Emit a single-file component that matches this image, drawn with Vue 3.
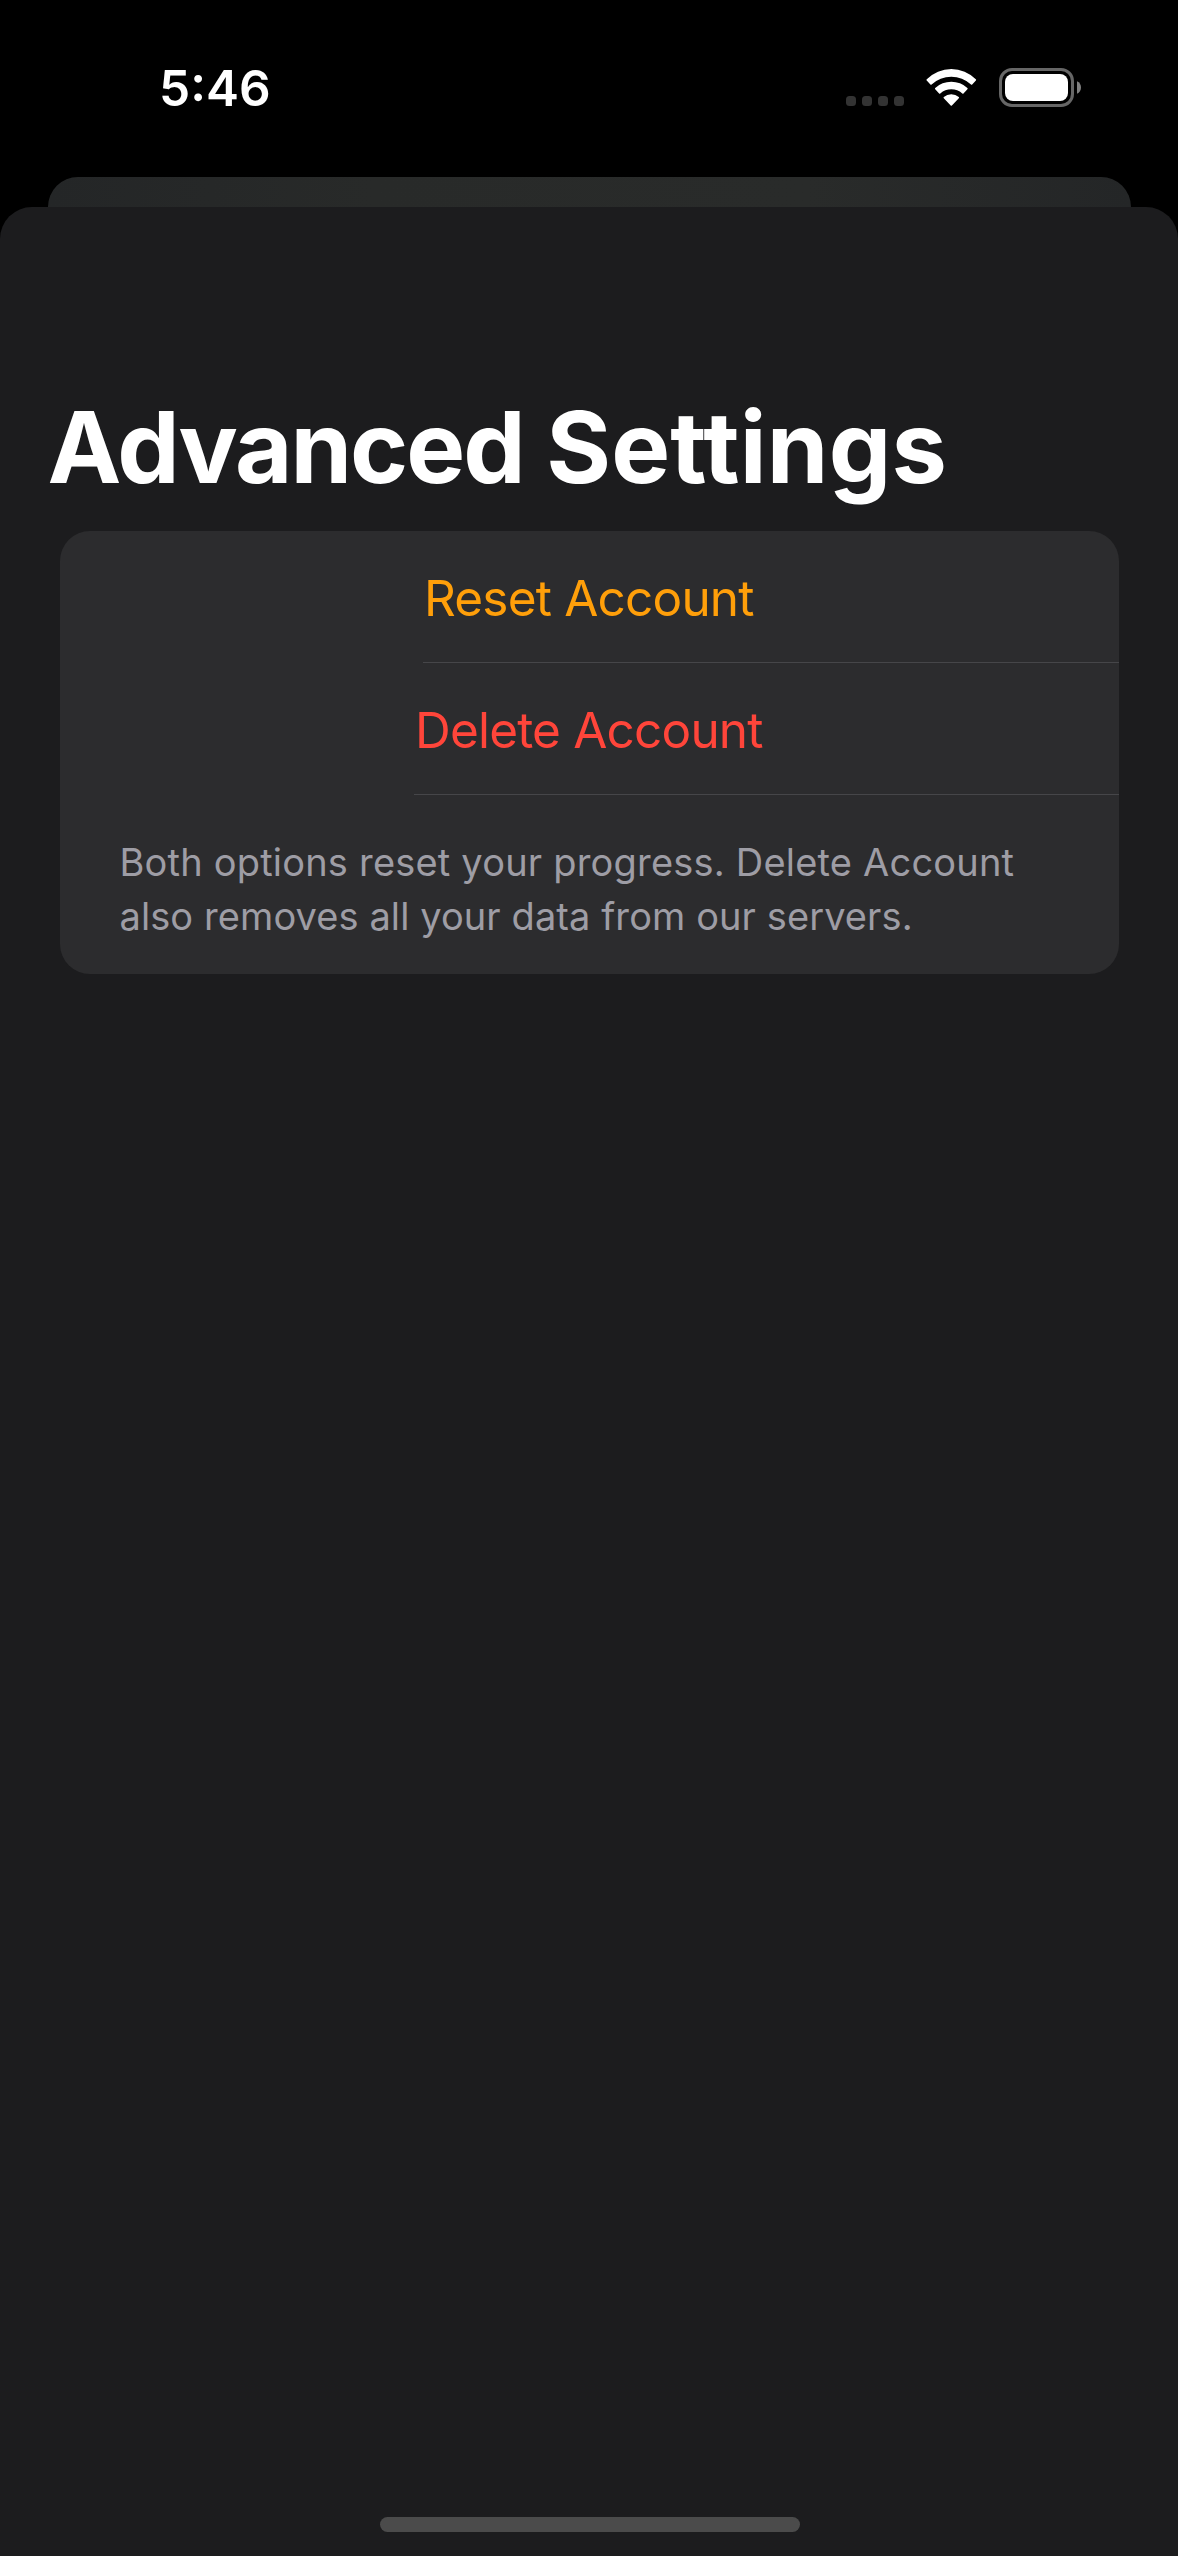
<script setup>
const actions = [
  { id: 'reset', label: 'Reset Account' },
  { id: 'delete', label: 'Delete Account' }
]
const note = [
  'Both options reset your progress. Delete Account',
  'also removes all your data from our servers.'
]
</script>

<template>
  <main class="screen">
    <header class="status">
      <span class="time">5:46</span>
      <div class="indicators">
        <div class="dots"><i v-for="n in 4" :key="n"></i></div>
        <svg class="wifi" width="51" height="38" viewBox="0 0 51 38" fill="#fff">
          <path d="M.7 11.4Q.2 10.8.8 10.3A34.5 34.5 0 0 1 49.8 10.3Q50.4 10.8 49.9 11.4L46.2 15.4Q45.6 16 45 15.4A29 29 0 0 0 5.6 15.4Q5 16 4.4 15.4Z" />
          <path d="M9.2 20.2Q8.6 19.6 9.2 19.1A23.5 23.5 0 0 1 41.4 19.1Q42 19.6 41.4 20.2L37.5 24.4Q36.9 25 36.3 24.4A16.6 16.6 0 0 0 14.3 24.4Q13.7 25 13.1 24.4Z" />
          <path d="M17.8 29.2Q17.2 28.6 17.8 28.1A11.2 11.2 0 0 1 32.8 28.1Q33.4 28.6 32.8 29.2L25.9 36.4Q25.3 37 24.7 36.4Z" />
        </svg>
        <svg class="battery" width="83" height="39" viewBox="0 0 83 39">
          <rect x="1.5" y="1.5" width="72" height="36" rx="11.5" fill="none" stroke="#666" stroke-width="3" />
          <rect x="6" y="6" width="63" height="27" rx="8" fill="#fff" />
          <path d="M78 13.3C80.6 14.4 82 16.8 82 19.5S80.6 24.6 78 25.7Z" fill="#808080" />
        </svg>
      </div>
    </header>

    <div class="back-sheet"></div>

    <section class="sheet">
      <h1><span class="first">Advanced</span> <span class="second">Settings</span></h1>
      <div class="card">
        <div v-for="a in actions" :key="a.id" class="row" :class="a.id">
          <span>{{ a.label }}</span>
        </div>
        <p class="note">
          <span v-for="line in note" :key="line">{{ line }}</span>
        </p>
      </div>
      <div class="home"></div>
    </section>
  </main>
</template>

<style>
body {
  margin: 0;
  background: #000;
}
</style>

<style scoped>
.screen {
  display: flex;
  flex-direction: column;
  width: 1178px;
  height: 2556px;
  overflow: hidden;
  background: #000;
  color: #fff;
  font-family: Inter, "Liberation Sans", sans-serif;
}
.status {
  box-sizing: border-box;
  display: flex;
  flex: none;
  justify-content: space-between;
  height: 177px;
  padding: 58px 96px 0 159px;
}
.time {
  height: 60px;
  font-size: 49.5px;
  font-weight: 600;
  line-height: 60px;
}
.indicators {
  display: flex;
  align-items: flex-start;
}
.dots {
  display: flex;
  gap: 6px;
  margin: 38px 22px 0 0;
}
.dots i {
  width: 10px;
  height: 10px;
  border-radius: 3.5px;
  background: #333;
}
.wifi {
  margin: 11px 22px 0 0;
}
.battery {
  margin-top: 10px;
}
.back-sheet {
  flex: none;
  height: 30px;
  margin: 0 47px 0 48px;
  border-radius: 30px 30px 0 0;
  background: linear-gradient(90deg, #242627, #282a29 30%, #292b2a 70%, #242627);
}
.sheet {
  display: flex;
  flex: 1;
  flex-direction: column;
  border-radius: 32px 32px 0 0;
  background: #1c1c1e;
}
h1 {
  margin: 180px 0 24px 47.5px;
  font-size: 99px;
  font-weight: 700;
  line-height: 120px;
  letter-spacing: -1px;
  white-space: nowrap;
}
.first {
  letter-spacing: -2px;
}
.second {
  letter-spacing: 0.2px;
}
.card {
  box-sizing: border-box;
  height: 443px;
  margin: 0 59.5px 0 60px;
  border-radius: 30px;
  background: #2c2c2e;
}
.row {
  box-sizing: border-box;
  height: 132px;
  padding: 3px 0 0 1px;
  border-bottom: 1px solid #464649;
  font-size: 49.5px;
  line-height: 128px;
  letter-spacing: -0.81px;
  white-space: nowrap;
}
.reset {
  margin-left: 363px;
  color: #ff9f0a;
}
.delete {
  margin-left: 354px;
  color: #ff453a;
}
.note {
  margin: 40px 0 0 59.5px;
  color: #9e9da5;
  font-size: 38px;
  line-height: 54px;
  letter-spacing: 0.2px;
  white-space: nowrap;
}
.note span {
  display: block;
}
.note span + span {
  letter-spacing: 0.09px;
}
.home {
  width: 420px;
  height: 15px;
  margin: auto auto 24px 380px;
  border-radius: 7.5px;
  background: #4b4b4b;
}
</style>
